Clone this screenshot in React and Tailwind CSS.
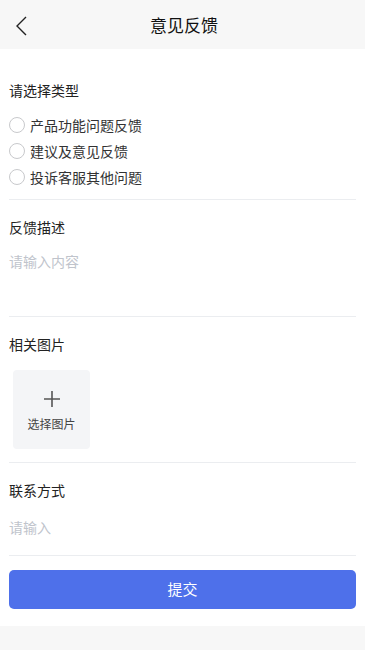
import React from "react";

const font = { fontFamily: '"Noto Sans CJK SC", "Noto Sans", sans-serif' };

function Radio({ label }) {
  return (
    <label className="flex items-center h-[26px]">
      <span className="w-[16px] h-[16px] rounded-full border border-[#c8c9cc] bg-white shrink-0"></span>
      <span className="ml-[5px] text-[14px] text-[#323233] leading-none">{label}</span>
    </label>
  );
}

export default function App() {
  return (
    <div className="w-[365px] h-[650px] bg-[#f7f7f7] flex flex-col" style={font}>
      {/* Header */}
      <div className="h-[49px] flex items-center relative bg-[#f7f7f7]">
        <svg className="absolute left-[14px] top-[15px]" width="16" height="22" viewBox="0 0 16 22" fill="none">
          <path d="M12 2 L3 11 L12 20" stroke="#222" strokeWidth="1.4" />
        </svg>
        <div className="flex-1 text-center text-[17px] text-[#111] pl-[3px]">意见反馈</div>
      </div>

      {/* Body */}
      <div className="bg-white px-[9px] pt-[34px] pb-[17px]">
        {/* Type */}
        <div className="text-[14px] text-[#222] leading-none">请选择类型</div>
        <div className="mt-[15px] flex flex-col">
          <Radio label="产品功能问题反馈" />
          <Radio label="建议及意见反馈" />
          <Radio label="投诉客服其他问题" />
        </div>
        <div className="mt-[9px] border-b border-[#ebedf0]"></div>

        {/* Description */}
        <div className="pt-[20px] text-[14px] text-[#222] leading-none">反馈描述</div>
        <div className="mt-[20px] h-[62px] text-[14px] text-[#c0c4cc] leading-none">请输入内容</div>
        <div className="border-b border-[#ebedf0]"></div>

        {/* Pictures */}
        <div className="pt-[20px] text-[14px] text-[#222] leading-none">相关图片</div>
        <div className="mt-[19px] ml-[4px] w-[77px] h-[79px] rounded-[4px] bg-[#f4f5f7] flex flex-col items-center justify-center">
          <svg width="18" height="18" viewBox="0 0 18 18">
            <path d="M9 1 V17 M1 9 H17" stroke="#555" strokeWidth="1.6" />
          </svg>
          <div className="mt-[10px] text-[12px] text-[#444] leading-none">选择图片</div>
        </div>
        <div className="mt-[13px] border-b border-[#ebedf0]"></div>

        {/* Contact */}
        <div className="pt-[20px] text-[14px] text-[#222] leading-none">联系方式</div>
        <div className="mt-[23px] h-[35px] text-[14px] text-[#c0c4cc] leading-none">请输入</div>
        <div className="border-b border-[#ebedf0]"></div>

        <button className="mt-[14px] w-full h-[39px] rounded-[5px] bg-[#4e70ea] text-white text-[15px]">
          提交
        </button>
      </div>
    </div>
  );
}
